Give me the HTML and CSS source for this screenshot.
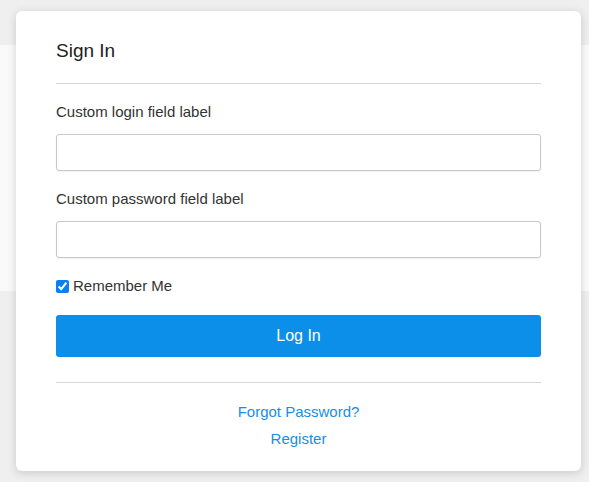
FILE: index.html
```html
<!DOCTYPE html>
<html>
<head>
<meta charset="utf-8">
<link rel="stylesheet" href="styles.css">
</head>
<body>
<div class="page">
  <div class="band-top"></div>
  <div class="band-mid"></div>
  <div class="band-bottom"></div>
</div>
<div class="modal">
  <h1 class="title">Sign In</h1>
  <hr class="rule">
  <form class="form">
    <label class="label" for="login">Custom login field label</label>
    <input class="input" id="login" type="text">
    <label class="label" for="pass">Custom password field label</label>
    <input class="input" id="pass" type="password">
    <label class="remember"><input class="check" type="checkbox" checked> Remember Me</label>
    <button class="btn" type="button">Log In</button>
  </form>
  <hr class="rule rule-bottom">
  <div class="links">
    <a class="link" href="#">Forgot Password?</a>
    <a class="link" href="#">Register</a>
  </div>
</div>
</body>
</html>
```
FILE: styles.css
```css
html, body {
  margin: 0;
  padding: 0;
}
body {
  width: 589px;
  height: 482px;
  overflow: hidden;
  background: #efefef;
  font-family: "Liberation Sans", Arial, sans-serif;
  position: relative;
}
.page {
  display: flex;
  flex-direction: column;
  height: 482px;
}
.band-top {
  height: 45px;
  background: #efefef;
}
.band-mid {
  height: 246px;
  background: #fafafa;
}
.band-bottom {
  flex: 1;
  background: #efefef;
}
.modal {
  position: absolute;
  left: 16px;
  top: 11px;
  width: 565px;
  height: 460px;
  box-sizing: border-box;
  background: #fff;
  border-radius: 6px;
  box-shadow: 0 2px 10px rgba(0,0,0,0.16);
  padding: 0 40px;
}
.title {
  margin: 0;
  padding-top: 29px;
  font-size: 19px;
  font-weight: normal;
  color: #222;
  line-height: 22px;
  height: 43px;
}
.rule {
  margin: 0;
  border: 0;
  border-top: 1px solid #d6d6d6;
}
.form {
  display: flex;
  flex-direction: column;
  padding-top: 19px;
}
.label {
  font-size: 15px;
  color: #333;
  line-height: 18px;
  margin-bottom: 13px;
}
.input {
  height: 37px;
  box-sizing: border-box;
  border: 1px solid #c8c8c8;
  border-radius: 3px;
  box-shadow: 0 1px 2px rgba(0,0,0,0.06);
  margin: 0 0 19px 0;
  padding: 0 8px;
  font-size: 14px;
}
.remember {
  display: flex;
  align-items: center;
  font-size: 15px;
  color: #333;
  line-height: 18px;
  margin-top: 0;
}
.check {
  width: 13px;
  height: 13px;
  margin: 0 4px 0 0;
  accent-color: #0b7ff0;
}
.btn {
  margin-top: 20px;
  height: 42px;
  border: 0;
  border-radius: 3px;
  background: #0b8fe8;
  color: #fff;
  font-family: "Liberation Sans", Arial, sans-serif;
  font-size: 16px;
}
.rule-bottom {
  margin-top: 25px;
}
.links {
  display: flex;
  flex-direction: column;
  align-items: center;
  gap: 9px;
  padding-top: 20px;
}
.link {
  color: #1a8de3;
  text-decoration: none;
  font-size: 15px;
  line-height: 18px;
}
```
